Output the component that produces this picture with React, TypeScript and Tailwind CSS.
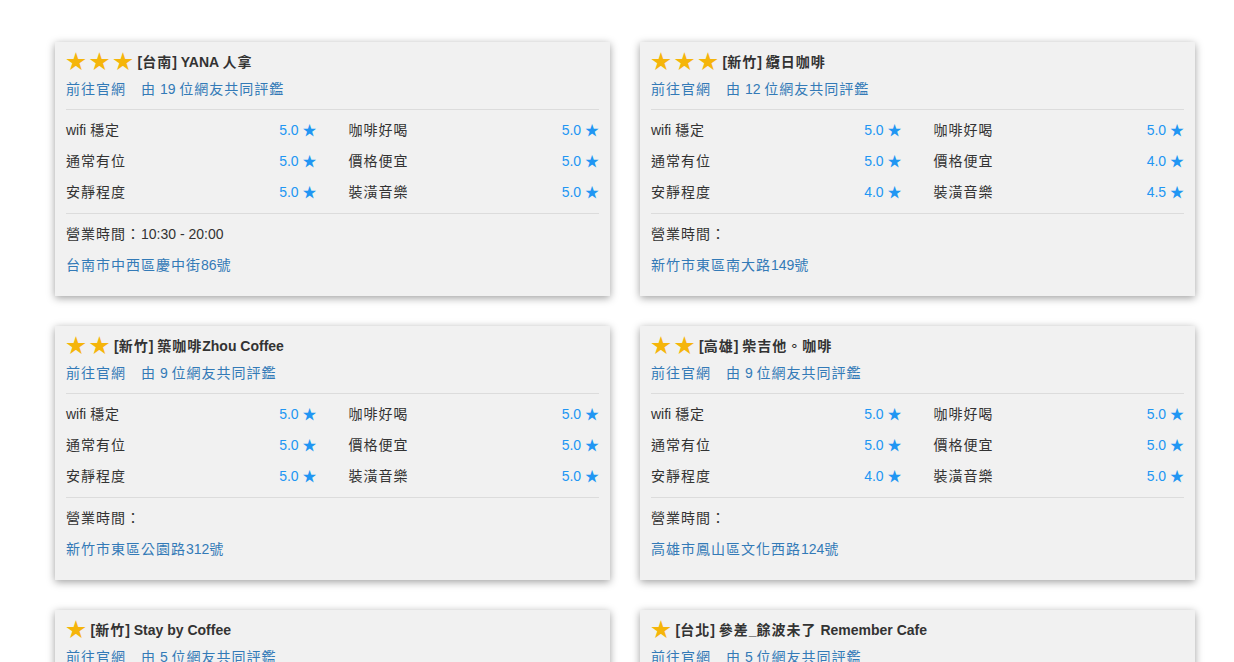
import React from "react";

type Shop = {
  stars: number;
  title: string;
  count: number;
  r: [string, string, string, string, string, string];
  hours: string;
  addr: string;
};

const shops: Shop[] = [
  { stars: 3, title: "[台南] YANA 人拿", count: 19, r: ["5.0", "5.0", "5.0", "5.0", "5.0", "5.0"], hours: "10:30 - 20:00", addr: "台南市中西區慶中街86號" },
  { stars: 3, title: "[新竹] 纜日咖啡", count: 12, r: ["5.0", "5.0", "5.0", "4.0", "4.0", "4.5"], hours: "", addr: "新竹市東區南大路149號" },
  { stars: 2, title: "[新竹] 築咖啡Zhou Coffee", count: 9, r: ["5.0", "5.0", "5.0", "5.0", "5.0", "5.0"], hours: "", addr: "新竹市東區公園路312號" },
  { stars: 2, title: "[高雄] 柴吉他。咖啡", count: 9, r: ["5.0", "5.0", "5.0", "5.0", "4.0", "5.0"], hours: "", addr: "高雄市鳳山區文化西路124號" },
  { stars: 1, title: "[新竹] Stay by Coffee", count: 5, r: ["5.0", "5.0", "5.0", "5.0", "5.0", "5.0"], hours: "", addr: "新竹市東區光復路二段101號" },
  { stars: 1, title: "[台北] 參差_餘波未了 Remember Cafe", count: 5, r: ["5.0", "5.0", "5.0", "5.0", "5.0", "5.0"], hours: "", addr: "台北市大安區羅斯福路三段" },
];

const labels = ["wifi 穩定", "咖啡好喝", "通常有位", "價格便宜", "安靜程度", "裝潢音樂"];

function T({ children }: { children: string }) {
  const parts = children.split(/([\u3000-\u9fff\uff00-\uffef]+)/);
  return (
    <>
      {parts.map((p, i) =>
        /[\u3000-\u9fff\uff00-\uffef]/.test(p) ? (
          <span key={i} className="tracking-[1px]">{p}</span>
        ) : (
          <React.Fragment key={i}>{p}</React.Fragment>
        )
      )}
    </>
  );
}

function Card({ s }: { s: Shop }) {
  return (
    <div className="bg-[#f1f1f1] shadow-[0_2px_8px_rgba(0,0,0,0.38)] px-[11px] pt-[8px] pb-[21px]">
      <div className="flex items-center h-[24px]">
        <span className="text-[#f5b50a] text-[20px] leading-[24px] mr-[1px] flex">
          {Array.from({ length: s.stars }).map((_, i) => (
            <span key={i} className="inline-block w-[23.5px]">★</span>
          ))}
        </span>
        <span className="font-bold text-[14px] text-[#333]"><T>{s.title}</T></span>
      </div>
      <div className="mt-[5px] leading-[20px] text-[14px] text-[#337ab7] flex gap-[15px]">
        <span><T>前往官網</T></span>
        <span><T>{`由 ${s.count} 位網友共同評鑑`}</T></span>
      </div>
      <div className="mt-[10px] border-t border-[#dcdcdc]" />
      <div className="grid grid-cols-2 gap-x-[32px] gap-y-[11px] pt-[10px] pb-[11px] text-[14px] leading-[20px]">
        {labels.map((l, i) => (
          <div key={l} className="flex justify-between">
            <span className="text-[#333]"><T>{l}</T></span>
            <span className="text-[#2196f3]">{s.r[i]} ★</span>
          </div>
        ))}
      </div>
      <div className="border-t border-[#dcdcdc]" />
      <div className="pt-[10px] text-[14px] leading-[20px] text-[#333]"><T>營業時間：</T>{s.hours}</div>
      <div className="mt-[11px] text-[14px] leading-[20px] text-[#337ab7]"><T>{s.addr}</T></div>
    </div>
  );
}

export default function App() {
  return (
    <div
      lang="zh-TW"
      className="min-h-screen bg-white"
      style={{ fontFamily: '"Liberation Sans", "Noto Sans CJK TC", sans-serif' }}
    >
      <div className="w-[1140px] ml-[55px] pt-[42px] grid grid-cols-2 gap-x-[30px] gap-y-[30px]">
        {shops.map((s, i) => (
          <Card key={i} s={s} />
        ))}
      </div>
    </div>
  );
}
